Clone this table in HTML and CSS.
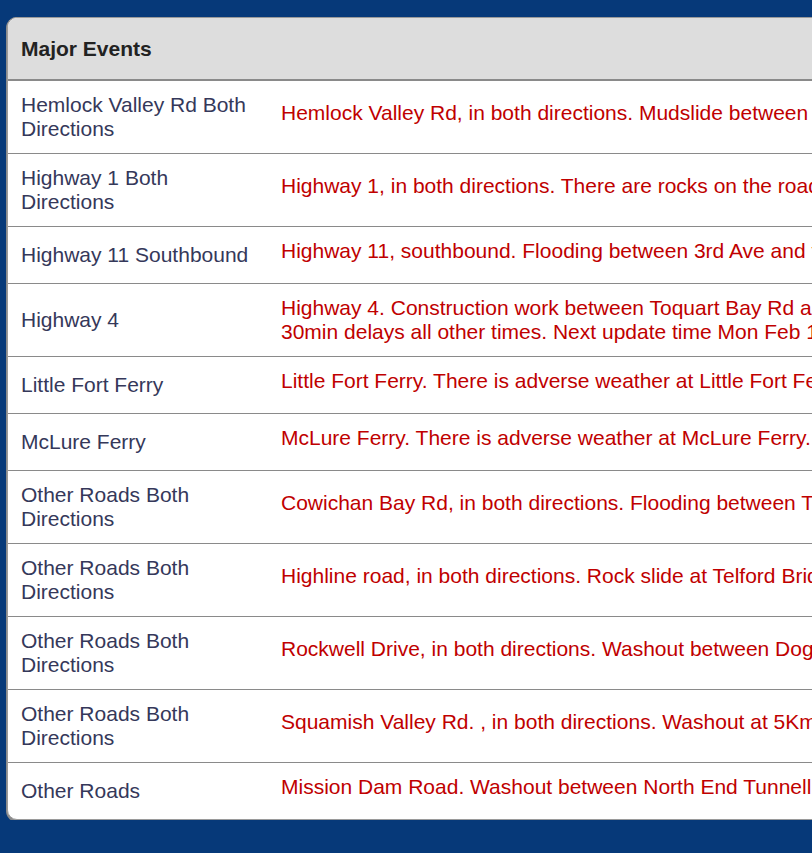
FILE: index.html
```html
<!DOCTYPE html>
<html>
<head>
<meta charset="utf-8">
<link rel="stylesheet" href="styles.css">
</head>
<body>
<div class="card">
  <div class="card-head">Major Events</div>
  <div class="row"><div class="area">Hemlock Valley Rd Both Directions</div><div class="desc">Hemlock Valley Rd, in both directions. Mudslide between Hemlock Valley and Morris Valley Rd. Road closed.</div></div>
  <div class="row"><div class="area">Highway 1 Both Directions</div><div class="desc">Highway 1, in both directions. There are rocks on the road near the highway. Road closed.</div></div>
  <div class="row"><div class="area">Highway 11 Southbound</div><div class="desc">Highway 11, southbound. Flooding between 3rd Ave and the border crossing. Road closed.</div></div>
  <div class="row wrap"><div class="area">Highway 4</div><div class="desc">Highway 4. Construction work between Toquart Bay Rd and Tofino-Ucluelet Junction.<br>30min delays all other times. Next update time Mon Feb 1 at 10:00 AM.</div></div>
  <div class="row"><div class="area">Little Fort Ferry</div><div class="desc">Little Fort Ferry. There is adverse weather at Little Fort Ferry. Ferry service cancelled.</div></div>
  <div class="row"><div class="area">McLure Ferry</div><div class="desc">McLure Ferry. There is adverse weather at McLure Ferry. Ferry service cancelled.</div></div>
  <div class="row"><div class="area">Other Roads Both Directions</div><div class="desc">Cowichan Bay Rd, in both directions. Flooding between Tzouhalem Rd and Cherry Point Rd.</div></div>
  <div class="row"><div class="area">Other Roads Both Directions</div><div class="desc">Highline road, in both directions. Rock slide at Telford Bridge. Road closed.</div></div>
  <div class="row"><div class="area">Other Roads Both Directions</div><div class="desc">Rockwell Drive, in both directions. Washout between Dogwood Rd and Thacker Ave. Road closed.</div></div>
  <div class="row"><div class="area">Other Roads Both Directions</div><div class="desc">Squamish Valley Rd. , in both directions. Washout at 5Km. Road closed.</div></div>
  <div class="row last"><div class="area">Other Roads</div><div class="desc">Mission Dam Road. Washout between North End Tunnell and Mission Dam. Road closed.</div></div>
</div>
</body>
</html>
```
FILE: styles.css
```css
html, body {
  margin: 0;
  padding: 0;
  overflow: hidden;
}
body {
  background: #063979;
  font-family: "Liberation Sans", Arial, sans-serif;
  font-size: 21px;
  line-height: 24px;
  padding: 17px 0 0 7px;
  width: 1600px;
}
.card {
  background: #fff;
  border: 1px solid #9a9a9a;
  border-radius: 10px;
  box-shadow: 0 1px 0 1px #8c8c8c;
  overflow: hidden;
  width: 1500px;
}
.card-head {
  background: #dddddd;
  color: #222;
  font-weight: bold;
  font-size: 21px;
  padding: 0 13px;
  border-bottom: 2px solid #8a8a8a;
  box-sizing: border-box;
  height: 63px;
  line-height: 62px;
}
.row {
  display: flex;
  align-items: center;
  padding: 12px 0;
  border-bottom: 1px solid #8a8a8a;
}
.row.last {
  border-bottom: none;
}
.area {
  width: 235px;
  flex: none;
  padding: 0 25px 0 13px;
  color: #35385a;
}
.desc {
  flex: 1;
  color: #c00000;
  white-space: nowrap;
  padding-bottom: 8px;
}
.row.wrap .desc {
  padding-bottom: 0;
}
```
